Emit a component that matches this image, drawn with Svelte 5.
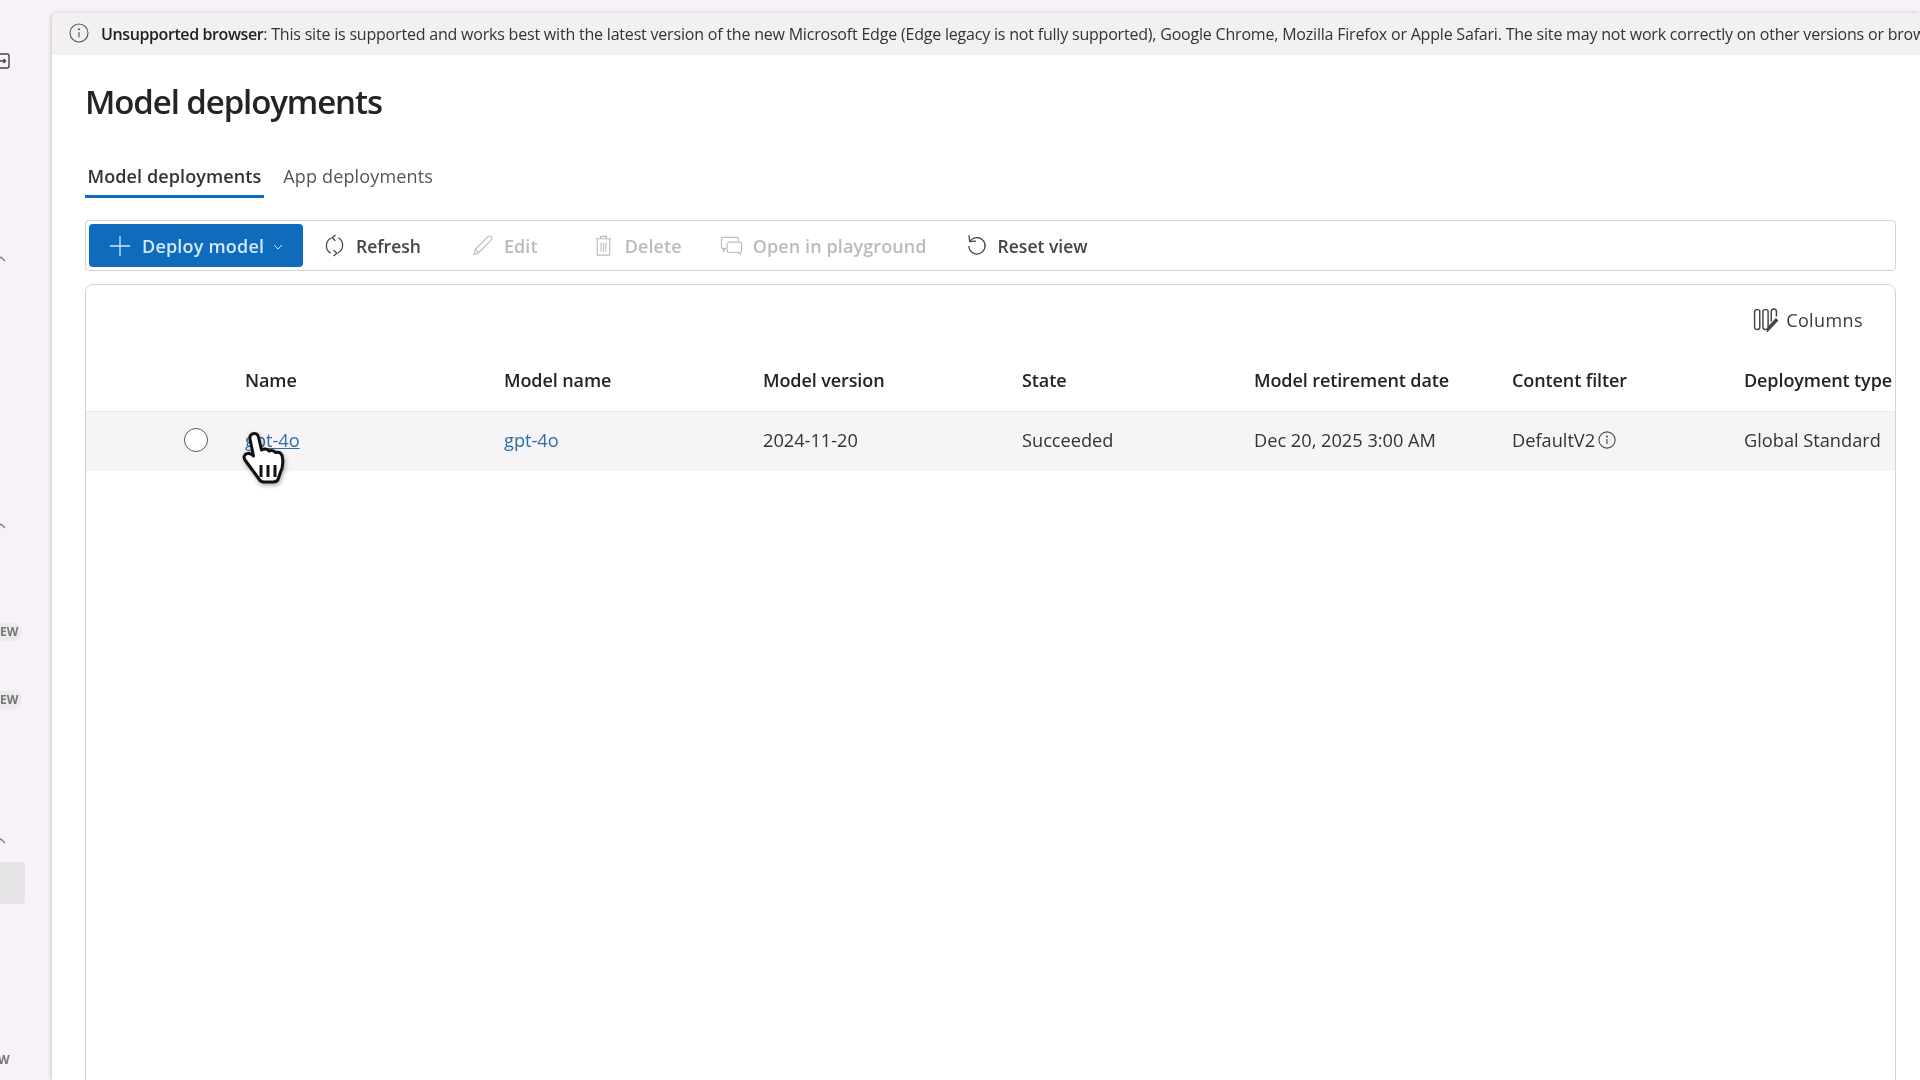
<script>
const columns = [
	{ title: "Name", value: "gpt-4o", kind: "link", width: 259 },
	{ title: "Model name", value: "gpt-4o", kind: "link", width: 259 },
	{ title: "Model version", value: "2024-11-20", width: 259 },
	{ title: "State", value: "Succeeded", width: 232 },
	{ title: "Model retirement date", value: "Dec 20, 2025 3:00 AM", width: 258 },
	{ title: "Content filter", value: "DefaultV2", kind: "info", width: 232 },
	{ title: "Deployment type", value: "Global Standard", width: 160 }
];
</script>

<div class="page">
	<aside class="side">
		<svg class="collapse" viewBox="0 0 10 16" fill="none" stroke="#444" stroke-width="1.4">
			<rect x="-6" y="1" width="15" height="14" rx="2" />
			<path d="M0 8h5M3.5 6l2 2-2 2" />
		</svg>
		<svg class="chev one" viewBox="0 0 8 6" fill="none" stroke="#777" stroke-width="1.2"><path d="M-3 5 1 1l4 4" /></svg>
		<svg class="chev two" viewBox="0 0 8 6" fill="none" stroke="#777" stroke-width="1.2"><path d="M-3 5 1 1l4 4" /></svg>
		<span class="chip first">EW</span>
		<span class="chip second">EW</span>
		<svg class="chev three" viewBox="0 0 8 6" fill="none" stroke="#777" stroke-width="1.2"><path d="M-3 5 1 1l4 4" /></svg>
		<div class="selected"></div>
		<span class="tail">W</span>
	</aside>

	<main class="panel">
		<div class="banner">
			<svg class="banner-icon" viewBox="0 0 20 20" fill="none" stroke="#555" stroke-width="1.1">
				<circle cx="10" cy="10" r="9" />
				<path d="M10 9v5.500" />
				<circle cx="10" cy="6.200" r=".5" fill="#555" />
			</svg>
			<p><strong>Unsupported browser</strong>: This site is supported and works best with the latest version of the new Microsoft Edge (Edge legacy is not fully supported), Google Chrome, Mozilla Firefox or Apple Safari. The site may not work correctly on other versions or browsers.</p>
		</div>

		<div class="content">
			<h1>Model deployments</h1>

			<div class="tabs">
				<button class="tab active">Model deployments</button>
				<button class="tab">App deployments</button>
			</div>

			<div class="toolbar">
				<button class="primary">
					<svg class="plus" viewBox="0 0 22 22" fill="none" stroke="#cfe6fa" stroke-width="1.3"><path d="M11 1v20M1 11h20" /></svg>
					<span>Deploy model</span>
					<svg class="caret" viewBox="0 0 10 6" fill="none" stroke="#cfe6fa" stroke-width="1"><path d="m1 1 4 4 4-4" /></svg>
				</button>
				<button class="tool refresh">
					<svg viewBox="0 0 24 24" fill="none" stroke="#444" stroke-width="1.3">
						<path d="M8.500 4.200A9 9 0 0 0 8 20" />
						<path d="M15.500 19.800A9 9 0 0 0 16 4" />
						<path d="M13 1l-3.500 3 3.500 3M11 17l3.500 3-3.500 3" />
					</svg>
					Refresh
				</button>
				<button class="tool off edit">
					<svg viewBox="0 0 24 24" fill="none" stroke="#bbb" stroke-width="1.2">
						<path d="M3 21.500 4.500 16 17.500 2.800c1-1 2.600-1 3.500 0s1 2.500 0 3.500L8 19.500 3 21.500zM4.500 16 8 19.500" />
					</svg>
					Edit
				</button>
				<button class="tool off delete">
					<svg viewBox="0 0 24 24" fill="none" stroke="#bbb" stroke-width="1.2">
						<path d="M4 5h16M9 5V2.500h6V5M5.500 5v17h13V5M9.500 9v9.500M12 9v9.500M14.500 9v9.500" />
					</svg>
					Delete
				</button>
				<button class="tool off play">
					<svg viewBox="0 0 24 24" fill="none" stroke="#bbb" stroke-width="1.2">
						<path d="M6 15H2.500a1 1 0 0 1-1-1V4.500a1 1 0 0 1 1-1h15.500a1 1 0 0 1 1 1V8" />
						<path d="M8 8.500h13.500a1 1 0 0 1 1 1V18a1 1 0 0 1-1 1H21v2l-2.500-2H8.500a1 1 0 0 1-1-1V9.500M3.500 15v3l2.500-3" />
					</svg>
					Open in playground
				</button>
				<button class="tool reset">
					<svg viewBox="0 0 24 24" fill="none" stroke="#444" stroke-width="1.3">
						<path d="M5.500 7.500A8.500 8.500 0 1 1 4 12.500" />
						<path d="M4 1.500 5 8l6.500-.5" />
					</svg>
					Reset view
				</button>
			</div>

			<section class="grid">
				<div class="grid-top">
					<button class="tool cols">
						<svg viewBox="0 0 24 24" fill="none" stroke="#444" stroke-width="1.4">
							<rect x="1.500" y="2.500" width="5" height="19" rx="2" />
							<rect x="9.500" y="2.500" width="5" height="19" rx="2" />
							<path d="M17.500 14V4.500a2 2 0 0 1 5 0V9" />
							<path d="m14 23 1-4 7-7.500 1.500 1.500-7 7.500z" fill="#444" />
						</svg>
						Columns
					</button>
				</div>
				<div class="row head">
					<div class="lead"></div>
					{#each columns as col}
						<div class="cell" style:width="{col.width}px">{col.title}</div>
					{/each}
				</div>
				<div class="row body">
					<div class="lead"><span class="radio"></span></div>
					{#each columns as col}
						<div class="cell" style:width="{col.width}px">
							{#if col.kind === "link"}
								<a href="#top" class:hovered={col.title === "Name"}>{col.value}</a>
							{:else}
								{col.value}
							{/if}
							{#if col.kind === "info"}
								<svg class="cell-info" viewBox="0 0 20 20" fill="none" stroke="#444" stroke-width="1.2">
									<circle cx="10" cy="10" r="9" />
									<path d="M10 9v5.500" />
									<circle cx="10" cy="6.200" r=".5" fill="#444" />
								</svg>
							{/if}
						</div>
					{/each}
				</div>
				<svg class="cursor" viewBox="0 0 46 54">
					<path d="M11 3c3-1.500 6 0 6.500 3l3 13c3-1.500 6-1 7.500 1 2.500-1 5-.5 6.500 1.500 3-1 5.500.500 6.500 3 1.500 6 .5 13-2 18l-2 6c-1 2-3 2.500-5 2.500H23c-2.500 0-4-1-5-3L4 29c-2-3-.5-6 2.500-6.500 2-.5 4 .5 6 2.500L9 8c-.5-2 .5-4 2-5z" fill="#fff" stroke="#111" stroke-width="3" stroke-linejoin="round" />
					<path d="M20 34v12M27 34v12M34 34v12" stroke="#111" stroke-width="3" fill="none" />
				</svg>
			</section>
		</div>
	</main>
</div>

<style>
:global(body) {
	margin: 0;
	background: #f6f2f7;
	font-family: "Open Sans", "Liberation Sans", sans-serif;
	color: #242424;
	overflow: hidden;
}
button {
	font: inherit;
	background: none;
	border: none;
	padding: 0;
	color: inherit;
}
.page {
	display: flex;
	height: 1080px;
	padding-top: 13px;
	box-sizing: border-box;
	overflow: hidden;
	filter: blur(0.4px);
}
.side {
	width: 52px;
	flex: none;
	display: flex;
	flex-direction: column;
	align-items: flex-start;
	overflow: hidden;
}
.collapse {
	width: 10px;
	height: 16px;
	margin-top: 40px;
}
.chev {
	width: 8px;
	height: 6px;
}
.chev.one {
	margin-top: 187px;
}
.chev.two {
	margin-top: 261px;
}
.chev.three {
	margin-top: 129px;
}
.chip {
	font-size: 12px;
	font-weight: 700;
	color: #777;
	background: #eceaec;
	border-radius: 0 9px 9px 0;
	line-height: 18px;
	padding-right: 4px;
}
.chip.first {
	margin-top: 94px;
}
.chip.second {
	margin-top: 50px;
}
.selected {
	width: 25px;
	height: 42px;
	background: #e6e4e7;
	margin-top: 18px;
	border-radius: 0 3px 3px 0;
}
.tail {
	font-size: 12px;
	font-weight: 700;
	color: #777;
	margin-top: 147px;
	margin-left: -2px;
}
.panel {
	flex: 1;
	min-width: 0;
	background: #fff;
	box-shadow: -1px 0 4px rgba(0, 0, 0, 0.18);
	border-top-left-radius: 6px;
}
.banner {
	height: 42px;
	background: #f3f0f3;
	display: flex;
	align-items: center;
	gap: 12px;
	padding-left: 17px;
	white-space: nowrap;
	overflow: hidden;
	font-size: 16px;
	letter-spacing: -0.2px;
	border-top-left-radius: 6px;
}
.banner-icon {
	width: 20px;
	height: 20px;
	flex: none;
	margin-top: -2px;
}
.banner p {
	margin: 0;
	color: #333;
}
.banner strong {
	font-weight: 600;
	color: #222;
	letter-spacing: -0.4px;
}
.content {
	padding: 0 24px 0 33px;
}
h1 {
	margin: 26px 0 0;
	font-size: 33px;
	line-height: 42px;
	font-weight: 600;
	letter-spacing: -1.1px;
	color: #242424;
}
.tabs {
	display: flex;
	margin-top: 40px;
	font-size: 18px;
}
.tab {
	padding: 0 2.500px 6px;
	margin-right: 17px;
	line-height: 26px;
	color: #555;
	letter-spacing: 0.15px;
	border-bottom: 3px solid transparent;
}
.tab.active {
	font-weight: 600;
	color: #333;
	letter-spacing: 0.1px;
	border-bottom-color: #0f6cbd;
}
.toolbar {
	display: flex;
	align-items: center;
	height: 51px;
	box-sizing: border-box;
	margin-top: 22px;
	border: 1.5px solid #d4d4d4;
	border-radius: 4px;
	padding-left: 3px;
	font-size: 17.500px;
}
.primary {
	display: flex;
	align-items: center;
	width: 214px;
	height: 43px;
	padding-left: 20px;
	box-sizing: border-box;
	background: #0f6cbd;
	color: #d3e8fb;
	border-radius: 4px;
	font-weight: 600;
	font-size: 18px;
	letter-spacing: 0.2px;
}
.plus {
	width: 22px;
	height: 22px;
	margin-right: 11px;
}
.caret {
	width: 10px;
	height: 6px;
	margin-left: 9px;
	margin-top: 3px;
}
.tool {
	display: flex;
	align-items: center;
	gap: 10px;
	font-weight: 600;
	color: #444;
}
.tool svg {
	width: 23px;
	height: 23px;
	flex: none;
}
.tool.off {
	color: #bbb;
	font-size: 18px;
	letter-spacing: 0.1px;
}
.refresh {
	margin-left: 20px;
}
.edit {
	margin-left: 50px;
}
.delete {
	margin-left: 54px;
}
.play {
	margin-left: 38px;
}
.reset {
	margin-left: 38px;
}
.grid {
	position: relative;
	margin-top: 13px;
	border: 1.500px solid #d4d4d4;
	border-radius: 8px 8px 0 0;
	height: 900px;
	overflow: hidden;
}
.grid-top {
	display: flex;
	justify-content: flex-end;
	padding: 22px 32px 0 0;
	height: 45px;
}
.grid-top .cols {
	gap: 8px;
	align-self: flex-start;
	font-weight: 500;
	font-size: 18px;
	letter-spacing: 0.4px;
	color: #3a3a3a;
}
.grid-top .cols svg {
	width: 25px;
	height: 25px;
}
.row {
	display: flex;
	align-items: center;
	white-space: nowrap;
}
.row.head {
	height: 60px;
	padding-bottom: 4px;
	box-sizing: border-box;
	font-weight: 600;
	font-size: 18px;
	letter-spacing: -0.1px;
	border-bottom: 1px solid #ecebec;
}
.row.body {
	height: 59px;
	padding-bottom: 3px;
	box-sizing: border-box;
	background: #f6f4f7;
	color: #333;
	font-size: 18.200px;
}
.lead {
	width: 159px;
	flex: none;
	display: flex;
	justify-content: flex-end;
	padding-right: 37px;
	box-sizing: border-box;
}
.cell {
	flex: none;
	display: flex;
	align-items: center;
}
.radio {
	width: 22px;
	height: 22px;
	border: 1.500px solid #555;
	border-radius: 50%;
	background: #fff;
}
a {
	color: #2f6ea5;
	text-decoration: none;
}
a.hovered {
	text-decoration: underline;
}
.cell-info {
	width: 18px;
	height: 18px;
	margin-left: 3px;
}
.cursor {
	position: absolute;
	left: 153px;
	top: 146px;
	width: 50px;
	height: 54px;
	filter: drop-shadow(1px 2px 2px rgba(0, 0, 0, 0.35));
}
</style>
